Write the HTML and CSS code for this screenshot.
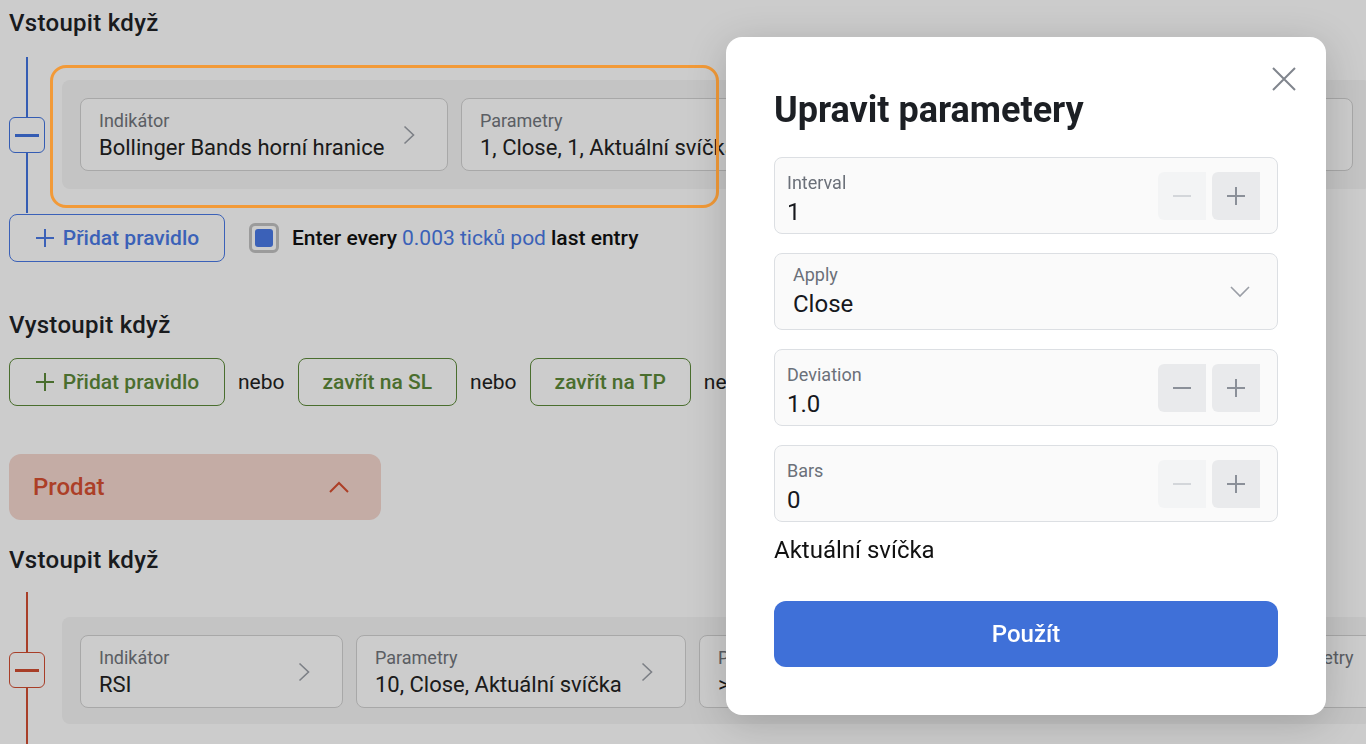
FILE: index.html
```html
<!DOCTYPE html>
<html lang="cs">
<head>
    <meta charset="UTF-8">
    <meta name="viewport" content="width=device-width, initial-scale=1.0">
    <title>Strategie - Upravit parametery</title>
    <link rel="stylesheet" href="styles.css">
</head>
<body>

    <main class="page">
        <!-- Buy: entry rules -->
        <h3 class="section-title">Vstoupit když</h3>
        <div class="rule-group buy">
            <div class="rail"><button class="rail-btn"><span></span></button></div>
            <div class="rule-box">
                <div class="field-card" style="width: 368px">
                    <div class="card-text">
                        <span class="card-label">Indikátor</span>
                        <span class="card-value">Bollinger Bands horní hranice</span>
                    </div>
                    <svg class="chev" width="12" height="20" viewBox="0 0 12 20"><path d="M1.5 1.5l9 8.5-9 8.5"/></svg>
                </div>
                <div class="field-card" style="width: 606px">
                    <div class="card-text">
                        <span class="card-label">Parametry</span>
                        <span class="card-value">1, Close, 1, Aktuální svíčka</span>
                    </div>
                    <svg class="chev" width="12" height="20" viewBox="0 0 12 20"><path d="M1.5 1.5l9 8.5-9 8.5"/></svg>
                </div>
                <div class="field-card" style="width: 273px">
                    <div class="card-text">
                        <span class="card-label">Podmínka</span>
                        <span class="card-value">&lt; Cena</span>
                    </div>
                    <svg class="chev" width="12" height="20" viewBox="0 0 12 20"><path d="M1.5 1.5l9 8.5-9 8.5"/></svg>
                </div>
            </div>
        </div>

        <div class="action-row">
            <button class="add-btn blue">
                <svg width="20" height="20" viewBox="0 0 20 20"><path d="M10 1v18M1 10h18"/></svg>
                Přidat pravidlo
            </button>
            <label class="check-line">
                <span class="checkbox"><span></span></span>
                Enter every <span class="hl">0.003 ticků pod</span> last entry
            </label>
        </div>

        <!-- Buy: exit rules -->
        <h3 class="section-title exit-title">Vystoupit když</h3>
        <div class="action-row exit-row">
            <button class="add-btn green">
                <svg width="20" height="20" viewBox="0 0 20 20"><path d="M10 1v18M1 10h18"/></svg>
                Přidat pravidlo
            </button>
            <span class="or">nebo</span>
            <button class="close-btn">zavřít na SL</button>
            <span class="or">nebo</span>
            <button class="close-btn">zavřít na TP</button>
            <span class="or">nebo</span>
        </div>

        <!-- Sell -->
        <div class="side-bar">
            <span>Prodat</span>
            <svg width="20" height="12" viewBox="0 0 20 12"><path d="M1 11l9-9 9 9"/></svg>
        </div>

        <h3 class="section-title sell-title">Vstoupit když</h3>
        <div class="rule-group sell">
            <div class="rail"><button class="rail-btn"><span></span></button></div>
            <div class="rule-box">
                <div class="field-card" style="width: 263px">
                    <div class="card-text">
                        <span class="card-label">Indikátor</span>
                        <span class="card-value">RSI</span>
                    </div>
                    <svg class="chev" width="12" height="20" viewBox="0 0 12 20"><path d="M1.5 1.5l9 8.5-9 8.5"/></svg>
                </div>
                <div class="field-card" style="width: 330px">
                    <div class="card-text">
                        <span class="card-label">Parametry</span>
                        <span class="card-value">10, Close, Aktuální svíčka</span>
                    </div>
                    <svg class="chev" width="12" height="20" viewBox="0 0 12 20"><path d="M1.5 1.5l9 8.5-9 8.5"/></svg>
                </div>
                <div class="field-card" style="width: 540px">
                    <div class="card-text">
                        <span class="card-label">Podmínka</span>
                        <span class="card-value">&gt; Hodnota</span>
                    </div>
                    <svg class="chev" width="12" height="20" viewBox="0 0 12 20"><path d="M1.5 1.5l9 8.5-9 8.5"/></svg>
                </div>
                <div class="field-card" style="width: 300px">
                    <div class="card-text">
                        <span class="card-label">Parametry</span>
                        <span class="card-value">70</span>
                    </div>
                </div>
            </div>
        </div>
    </main>

    <!-- Dimmed backdrop + tour highlight -->
    <div class="backdrop"></div>
    <div class="tour-ring"></div>

    <!-- Edit parameters dialog -->
    <div class="modal">
        <button class="modal-close">
            <svg width="24" height="24" viewBox="0 0 24 24"><path d="M1 1l22 22M23 1L1 23"/></svg>
        </button>
        <h2 class="modal-title">Upravit parametery</h2>

        <div class="modal-fields">
            <div class="num-field">
                <div class="field-text">
                    <span class="field-label">Interval</span>
                    <span class="field-value">1</span>
                </div>
                <button class="step disabled"><svg width="20" height="20" viewBox="0 0 20 20"><path d="M1 10h18"/></svg></button>
                <button class="step"><svg width="20" height="20" viewBox="0 0 20 20"><path d="M10 1v18M1 10h18"/></svg></button>
            </div>

            <div class="num-field select-field">
                <div class="field-text">
                    <span class="field-label">Apply</span>
                    <span class="field-value">Close</span>
                </div>
                <svg class="select-chev" width="20" height="12" viewBox="0 0 20 12"><path d="M1 1l9 9 9-9"/></svg>
            </div>

            <div class="num-field">
                <div class="field-text">
                    <span class="field-label">Deviation</span>
                    <span class="field-value">1.0</span>
                </div>
                <button class="step"><svg width="20" height="20" viewBox="0 0 20 20"><path d="M1 10h18"/></svg></button>
                <button class="step"><svg width="20" height="20" viewBox="0 0 20 20"><path d="M10 1v18M1 10h18"/></svg></button>
            </div>

            <div class="num-field">
                <div class="field-text">
                    <span class="field-label">Bars</span>
                    <span class="field-value">0</span>
                </div>
                <button class="step disabled"><svg width="20" height="20" viewBox="0 0 20 20"><path d="M1 10h18"/></svg></button>
                <button class="step"><svg width="20" height="20" viewBox="0 0 20 20"><path d="M10 1v18M1 10h18"/></svg></button>
            </div>
        </div>

        <p class="modal-note">Aktuální svíčka</p>
        <button class="apply-btn">Použít</button>
    </div>

</body>
</html>
```

FILE: styles.css
```css
/* Base */
body {
    margin: 0;
    background-color: #ffffff;
    font-family: Roboto, "Noto Sans", sans-serif;
    color: #222222;
    overflow: hidden;
}

button {
    font-family: inherit;
    cursor: pointer;
}

.page {
    padding: 9px 0 0 9px;
}

.section-title {
    margin: 0;
    font-size: 24px;
    font-weight: 500;
    line-height: 28px;
    letter-spacing: 0.3px;
    color: #202226;
}

.exit-title {
    margin-top: 49px;
}

.sell-title {
    margin-top: 26px;
}

/* Rule group with the vertical rail */
.rule-group {
    display: flex;
    height: 156px;
    margin-top: 20px;
}

.rule-group.sell {
    margin-top: 18px;
    --accent: #d24e33;
}

.rule-group.buy {
    --accent: #4274e0;
}

.rail {
    width: 36px;
    flex: none;
    display: flex;
    flex-direction: column;
    align-items: center;
}

.rail::before,
.rail::after {
    content: "";
    flex: 1;
    width: 2px;
    background-color: var(--accent);
}

.rail-btn {
    width: 36px;
    height: 36px;
    padding: 0;
    border: 1px solid var(--accent);
    border-radius: 6px;
    background-color: #ffffff;
    display: flex;
    align-items: center;
    justify-content: center;
}

.rail-btn span {
    width: 24px;
    height: 3px;
    background-color: var(--accent);
}

.rule-box {
    flex: none;
    width: 1309px;
    box-sizing: border-box;
    margin: 23px 0 24px 17px;
    padding: 18px;
    display: flex;
    gap: 13px;
    background-color: #f5f5f5;
    border-radius: 8px;
}

.sell .rule-box {
    margin-top: 25px;
}

.field-card {
    flex: none;
    height: 73px;
    box-sizing: border-box;
    padding: 11px 32px 0 18px;
    display: flex;
    background-color: #ffffff;
    border: 1px solid #d3d3d3;
    border-radius: 8px;
    overflow: hidden;
}

.card-text {
    flex: 1;
    display: flex;
    flex-direction: column;
    white-space: nowrap;
    overflow: hidden;
}

.card-label {
    font-size: 18px;
    line-height: 22px;
    color: #72767c;
}

.card-value {
    font-size: 22px;
    line-height: 31px;
    color: #222222;
}

.chev {
    flex: none;
    align-self: center;
    margin-left: 8px;
    margin-top: -10px;
}

.chev path {
    fill: none;
    stroke: #9ca0a8;
    stroke-width: 1.6;
}

/* Buttons row */
.action-row {
    display: flex;
    align-items: center;
    gap: 24px;
    height: 48px;
    margin-top: 1px;
}

.exit-row {
    gap: 13px;
    margin-top: 19px;
}

.add-btn {
    width: 216px;
    height: 48px;
    display: flex;
    align-items: center;
    justify-content: center;
    gap: 8px;
    background-color: #ffffff;
    border: 1px solid;
    border-radius: 8px;
    font-size: 21px;
    font-weight: 500;
}

.add-btn svg path {
    fill: none;
    stroke: currentColor;
    stroke-width: 2;
}

.add-btn.blue {
    color: #4a7ae6;
    border-color: #4a7ae6;
}

.add-btn.green {
    color: #5d8a3a;
    border-color: #5d8a3a;
}

.check-line {
    display: flex;
    align-items: center;
    gap: 5px;
    font-size: 21px;
    font-weight: 500;
    color: #111111;
}

.checkbox {
    width: 30px;
    height: 30px;
    box-sizing: border-box;
    margin-right: 8px;
    border: 3px solid #c2c2c2;
    border-radius: 6px;
    display: flex;
    align-items: center;
    justify-content: center;
}

.checkbox span {
    width: 18px;
    height: 18px;
    border-radius: 3px;
    background-color: #4a7ae6;
}

.hl {
    color: #4a7ae6;
    font-weight: 400;
}

.or {
    font-size: 21px;
    color: #222222;
}

.close-btn {
    height: 48px;
    padding: 0 24px;
    background-color: #ffffff;
    border: 1px solid #5d8a3a;
    border-radius: 8px;
    color: #5d8a3a;
    font-size: 21px;
    font-weight: 500;
}

/* Sell bar */
.side-bar {
    width: 372px;
    height: 66px;
    box-sizing: border-box;
    margin-top: 48px;
    padding: 0 32px 0 24px;
    display: flex;
    align-items: center;
    justify-content: space-between;
    background-color: #f5d7cf;
    border-radius: 12px;
    font-size: 24px;
    font-weight: 500;
    color: #d84f31;
}

.side-bar path {
    fill: none;
    stroke: #d84f31;
    stroke-width: 2;
}

/* Backdrop */
.backdrop {
    position: fixed;
    inset: 0;
    background-color: rgba(0, 0, 0, 0.2);
}

.tour-ring {
    position: fixed;
    left: 50px;
    top: 65px;
    width: 669px;
    height: 143px;
    box-sizing: border-box;
    border: 3px solid #f29a38;
    border-radius: 16px;
}

/* Modal */
.modal {
    position: fixed;
    left: 726px;
    top: 37px;
    width: 600px;
    box-sizing: border-box;
    padding: 51px 48px 48px;
    background-color: #ffffff;
    border-radius: 16px;
    box-shadow: 0 8px 40px rgba(0, 0, 0, 0.18);
    color: #16181d;
}

.modal-close {
    position: absolute;
    top: 30px;
    right: 30px;
    width: 24px;
    height: 24px;
    padding: 0;
    border: none;
    background: none;
}

.modal-close path {
    fill: none;
    stroke: #80858d;
    stroke-width: 2;
}

.modal-title {
    margin: 0 0 25px;
    font-size: 36px;
    font-weight: 700;
    line-height: 44px;
    color: #1c1f24;
}

.modal-fields {
    display: flex;
    flex-direction: column;
    gap: 19px;
}

.num-field {
    height: 77px;
    box-sizing: border-box;
    padding: 0 17px 0 12px;
    display: flex;
    align-items: center;
    gap: 6px;
    background-color: #fafafa;
    border: 1px solid #dcdfe3;
    border-radius: 8px;
}

.field-text {
    flex: 1;
    align-self: stretch;
    padding-top: 14px;
    display: flex;
    flex-direction: column;
}

.field-label {
    font-size: 18px;
    line-height: 22px;
    color: #6b7079;
    margin-bottom: 4px;
}

.field-value {
    font-size: 24px;
    line-height: 28px;
    color: #16181d;
}

.select-field {
    padding: 0 27px 0 18px;
}

.select-field .field-text {
    padding-top: 10px;
}

.select-chev path {
    fill: none;
    stroke: #9a9ea6;
    stroke-width: 1.6;
}

.step {
    width: 48px;
    height: 48px;
    padding: 0;
    border: none;
    border-radius: 6px 0 0 6px;
    background-color: #e9eaec;
    display: flex;
    align-items: center;
    justify-content: center;
}

.step path {
    fill: none;
    stroke: #8b9099;
    stroke-width: 2;
}

.step.disabled {
    background-color: #f3f4f5;
}

.step.disabled path {
    stroke: #d3d6da;
}

.modal-note {
    margin: 14px 0 0;
    font-size: 24px;
    line-height: 28px;
    color: #111111;
}

.apply-btn {
    width: 100%;
    height: 66px;
    margin-top: 37px;
    border: none;
    border-radius: 12px;
    background-color: #3f70d8;
    color: #ffffff;
    font-size: 24px;
    font-weight: 500;
}
```
